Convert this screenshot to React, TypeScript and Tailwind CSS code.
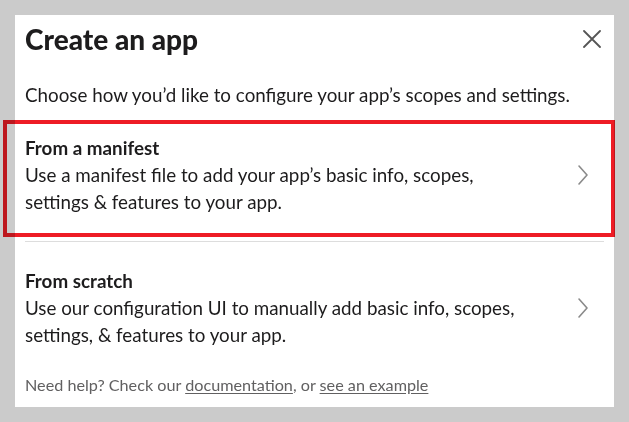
import React from "react";

function Chevron() {
  return (
    <svg width="12" height="22" viewBox="0 0 12 22" fill="none" className="shrink-0">
      <path d="M2 2 L10 11 L2 20" stroke="#8a8a8a" strokeWidth="1.6" strokeLinecap="round" strokeLinejoin="round" />
    </svg>
  );
}

function Option({ title, lines }: { title: string; lines: string[] }) {
  return (
    <div className="flex items-center justify-between pl-[10px] pr-[25px]">
      <div className="flex flex-col">
        <div className="text-[18.8px] font-bold leading-[27px] text-[#1d1c1d]">{title}</div>
        {lines.map((l) => (
          <div key={l} className="text-[18.8px] leading-[27px] text-[#1d1c1d]">{l}</div>
        ))}
      </div>
      <Chevron />
    </div>
  );
}

export default function App() {
  return (
    <div
      className="relative w-[629px] h-[422px] bg-[#cbcbcb] p-[15px] overflow-hidden"
      style={{ fontFamily: "Lato, 'Noto Sans', sans-serif" }}
    >
      <div className="bg-white h-[392px] flex flex-col">
        <div className="flex items-center justify-between pl-[10px] pr-[13px] pt-[7px]">
          <h1 className="text-[28px] font-black leading-[34px] text-[#1d1c1d]">Create an app</h1>
          <svg width="18" height="18" viewBox="0 0 18 18">
            <path d="M1 1 L17 17 M17 1 L1 17" stroke="#555555" strokeWidth="1.8" strokeLinecap="round" />
          </svg>
        </div>
        <p className="pl-[10px] mt-[25px] text-[18.8px] leading-[27px] text-[#1d1c1d]">
          Choose how you’d like to configure your app’s scopes and settings.
        </p>
        <div className="mt-[26px]">
          <Option
            title="From a manifest"
            lines={["Use a manifest file to add your app’s basic info, scopes,", "settings & features to your app."]}
          />
        </div>
        <div className="ml-[10px] mr-[10px] mt-[26px] h-px bg-[#dddddd]" />
        <div className="mt-[25px]">
          <Option
            title="From scratch"
            lines={["Use our configuration UI to manually add basic info, scopes,", "settings, & features to your app."]}
          />
        </div>
        <p className="pl-[10px] mt-[27px] text-[16.2px] leading-[20px] text-[#616061]">
          Need help? Check our <span className="underline underline-offset-2">documentation</span>, or{" "}
          <span className="underline underline-offset-2">see an example</span>
        </p>
      </div>
      <div className="absolute left-[3px] top-[120px] w-[612px] h-[117px] border-[4px] border-[#ee1c25] mix-blend-multiply pointer-events-none" />
    </div>
  );
}
